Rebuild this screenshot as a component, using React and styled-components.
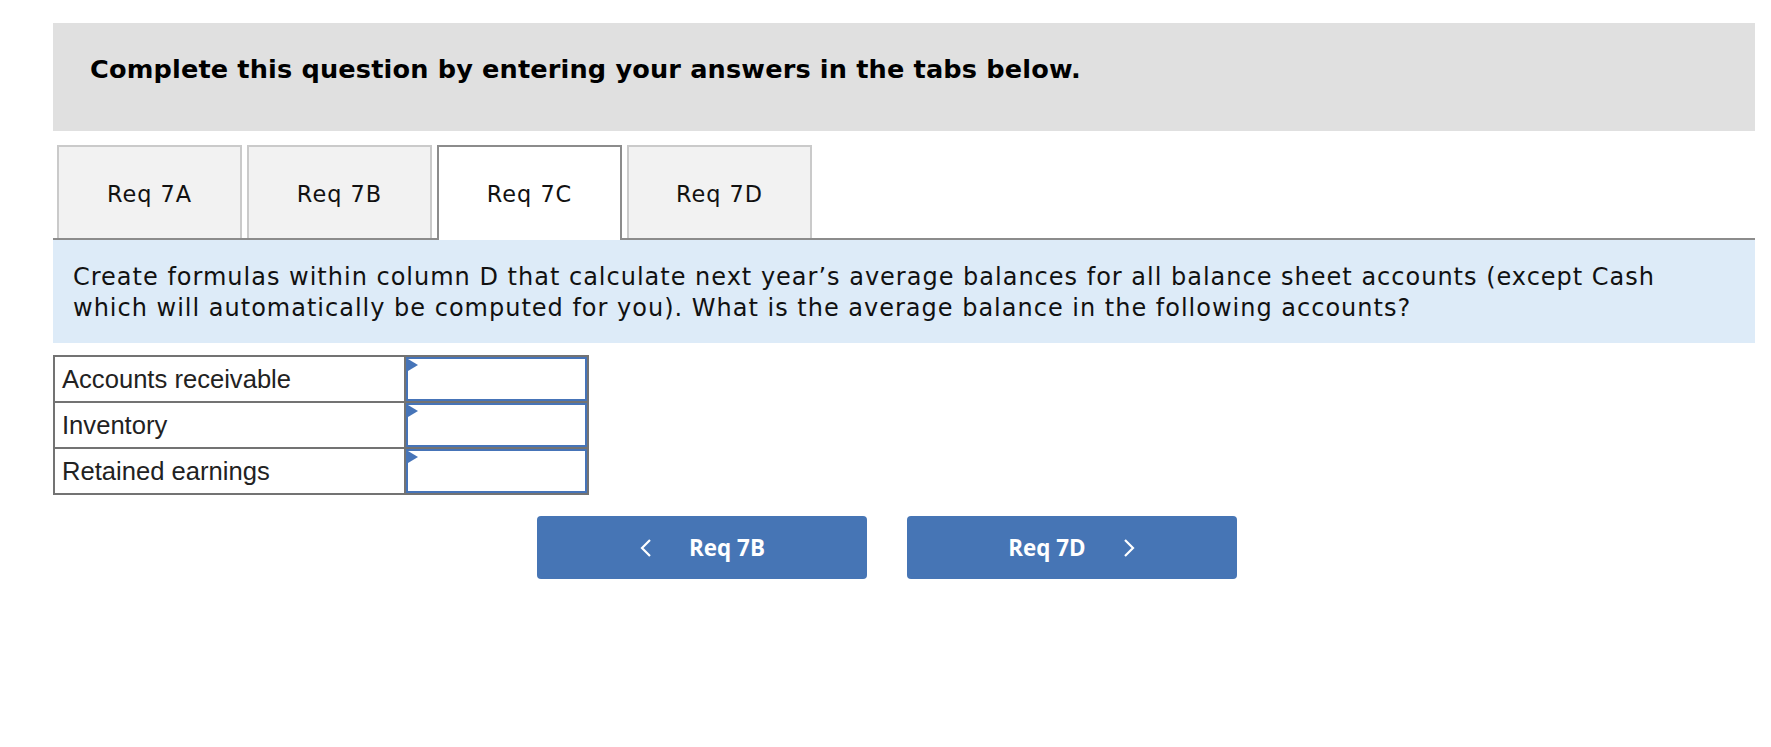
import React from 'react';
import styled, { createGlobalStyle } from 'styled-components';

const GlobalStyle = createGlobalStyle`
  body {
    margin: 0;
    background: #ffffff;
  }
`;

const tabs = ['Req 7A', 'Req 7B', 'Req 7C', 'Req 7D'];
const accounts = ['Accounts receivable', 'Inventory', 'Retained earnings'];

const ChevronLeft = () => (
  <svg width="14" height="20" viewBox="0 0 14 20">
    <polyline points="11,2 3,10 11,18" fill="none" stroke="#fff" strokeWidth="2.2" />
  </svg>
);

const ChevronRight = () => (
  <svg width="14" height="20" viewBox="0 0 14 20">
    <polyline points="3,2 11,10 3,18" fill="none" stroke="#fff" strokeWidth="2.2" />
  </svg>
);

const App = () => {
  return (
    <>
      <GlobalStyle />
      <Page>
        <Header>Complete this question by entering your answers in the tabs below.</Header>
        <TabRow>
          {tabs.map((t) => (
            <Tab key={t} $active={t === 'Req 7C'}>
              {t}
            </Tab>
          ))}
        </TabRow>
        <Prompt>
          Create formulas within column D that calculate next year’s average balances for all balance sheet accounts (except Cash
          <br />
          which will automatically be computed for you). What is the average balance in the following accounts?
        </Prompt>
        <AnswerTable>
          <tbody>
            {accounts.map((a) => (
              <tr key={a}>
                <LabelCell>{a}</LabelCell>
                <InputCell>
                  <Field />
                </InputCell>
              </tr>
            ))}
          </tbody>
        </AnswerTable>
        <NavRow>
          <NavButton>
            <ChevronLeft />
            <span>Req 7B</span>
          </NavButton>
          <NavButton>
            <span>Req 7D</span>
            <ChevronRight />
          </NavButton>
        </NavRow>
      </Page>
    </>
  );
};

export default App;

const Page = styled.div`
  width: 1702px;
  padding: 23px 0 0 53px;
`;

const Header = styled.div`
  height: 108px;
  box-sizing: border-box;
  padding: 31px 37px 0;
  background: #e0e0e0;
  color: #000;
  font-family: 'DejaVu Sans', Verdana, sans-serif;
  font-weight: bold;
  font-size: 25.6px;
  letter-spacing: 0.15px;
  line-height: 30px;
`;

const TabRow = styled.div`
  display: flex;
  align-items: flex-start;
  gap: 5px;
  margin-top: 14px;
  padding-left: 4px;
  height: 93px;
  border-bottom: 2px solid #8c8c8c;
`;

const Tab = styled.div`
  box-sizing: border-box;
  width: 185px;
  height: ${({ $active }) => ($active ? '95px' : '93px')};
  padding-top: 2px;
  padding-bottom: ${({ $active }) => ($active ? '2px' : '0')};
  display: flex;
  align-items: center;
  justify-content: center;
  border: 2px solid ${({ $active }) => ($active ? '#8c8c8c' : '#cacaca')};
  border-bottom: none;
  background: ${({ $active }) => ($active ? '#ffffff' : '#f2f2f2')};
  color: #111;
  font-family: 'DejaVu Sans', Verdana, sans-serif;
  font-size: 22.4px;
  letter-spacing: 1px;
`;

const Prompt = styled.div`
  background: #ddebf8;
  padding: 22px 20px 19px;
  color: #111;
  font-family: 'DejaVu Sans', Verdana, sans-serif;
  font-size: 24px;
  letter-spacing: 1px;
  line-height: 31px;
`;

const AnswerTable = styled.table`
  margin-top: 12px;
  border-collapse: collapse;
`;

const LabelCell = styled.td`
  width: 335px;
  height: 44px;
  padding: 0 7px;
  border: 2px solid #737373;
  color: #222;
  font-family: 'Liberation Sans', Arial, sans-serif;
  font-size: 25.6px;
`;

const InputCell = styled.td`
  width: 181px;
  padding: 0;
  border: 2px solid #737373;
`;

const Field = styled.div`
  position: relative;
  box-sizing: border-box;
  width: 100%;
  height: 44px;
  border: 2px solid #4674b8;
  background: #fff;

  &::before {
    content: '';
    position: absolute;
    left: 0;
    top: 0;
    border-left: 10px solid #4674b8;
    border-top: 6.5px solid transparent;
    border-bottom: 6.5px solid transparent;
  }
`;

const NavRow = styled.div`
  display: flex;
  gap: 40px;
  margin-top: 21px;
  padding-left: 484px;
`;

const NavButton = styled.button`
  width: 330px;
  height: 63px;
  display: flex;
  align-items: center;
  justify-content: center;
  gap: 36px;
  border: none;
  border-radius: 4px;
  background: #4675b5;
  color: #fff;
  font-family: 'Open Sans', sans-serif;
  font-weight: 700;
  font-size: 22.4px;
  cursor: pointer;
`;
